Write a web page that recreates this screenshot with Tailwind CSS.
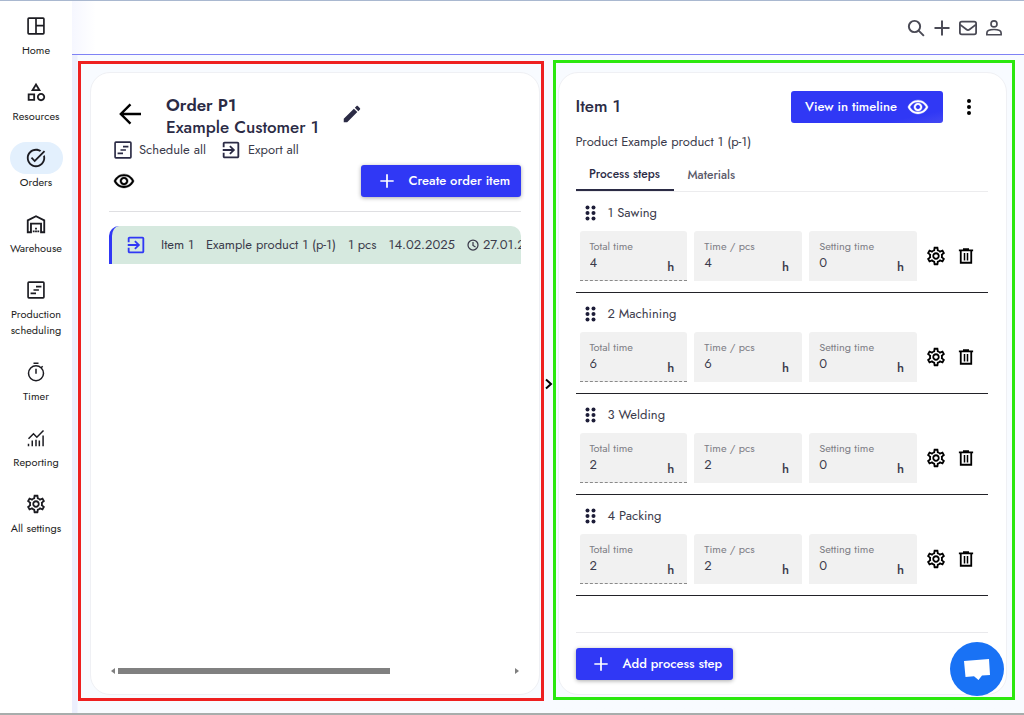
<!DOCTYPE html>
<html lang="en">
<head>
  <meta charset="UTF-8" />
  <meta name="viewport" content="width=device-width, initial-scale=1.0"/>
  <title>Order P1</title>
  <script src="https://cdn.jsdelivr.net/npm/@tailwindcss/browser@4"></script>
</head>
<body class="min-h-screen flex flex-col bg-[#f8fbff] text-[#3b3b4b] font-[Jost,Lato,sans-serif] border-t border-t-[#a9b8d0] border-b-2 border-b-[#a8adac]">

  <!-- Icons -->
  <svg class="hidden" xmlns="http://www.w3.org/2000/svg">
    <symbol id="i-home" viewBox="0 0 24 24"><path fill="none" stroke="currentColor" stroke-width="2" d="M3.500 2.500h17a1 1 0 0 1 1 1v17a1 1 0 0 1-1 1h-17a1 1 0 0 1-1-1v-17a1 1 0 0 1 1-1zM12 2.500v19M12 11.500h9.500"/></symbol>
    <symbol id="i-category" viewBox="0 0 24 24"><path fill="currentColor" d="M12 2l-5.500 9h11L12 2zm0 3.840L13.930 9h-3.870L12 5.840zM17.500 13c-2.490 0-4.500 2.010-4.500 4.500s2.010 4.500 4.500 4.500 4.500-2.010 4.500-4.500-2.010-4.500-4.500-4.500zm0 7c-1.380 0-2.500-1.120-2.500-2.500s1.120-2.500 2.500-2.500 2.500 1.120 2.500 2.500-1.120 2.500-2.500 2.500zM3 21.500h8v-8H3v8zm2-6h4v4H5v-4z"/></symbol>
    <symbol id="i-task" viewBox="0 0 24 24"><path fill="currentColor" d="M22 5.180L10.590 16.600l-4.240-4.240 1.410-1.410 2.830 2.830 10-10L22 5.180zm-2.210 5.040c.13.57.21 1.170.21 1.780 0 4.420-3.580 8-8 8s-8-3.580-8-8 3.580-8 8-8c1.580 0 3.040.46 4.280 1.250l1.440-1.440C16.100 2.670 14.130 2 12 2 6.480 2 2 6.480 2 12s4.480 10 10 10 10-4.480 10-10c0-1.190-.22-2.330-.6-3.390l-1.610 1.610z"/></symbol>
    <symbol id="i-warehouse" viewBox="0 0 24 24"><path fill="none" stroke="currentColor" stroke-width="2" d="M3 21V8l9-4.500L21 8v13h-3.500V11.500h-11V21H3z"/><path fill="currentColor" d="M8.500 19h2v2h-2zM11 16h2v2h-2zM11 19h2v2h-2zM13.500 19h2v2h-2z"/></symbol>
    <symbol id="i-schedule" viewBox="0 0 24 24"><path fill="none" stroke="currentColor" stroke-width="2" d="M3.500 2.500h17a1 1 0 0 1 1 1v17a1 1 0 0 1-1 1h-17a1 1 0 0 1-1-1v-17a1 1 0 0 1 1-1zM12 8h6.500M9 12h6.500M5.500 16H12"/></symbol>
    <symbol id="i-timer" viewBox="0 0 24 24"><path fill="none" stroke="currentColor" stroke-width="1.800" d="M9 1.500h6M12 8v6M18.500 6.500L20 5M21 13.500a9 9 0 1 1-18 0 9 9 0 0 1 18 0z"/></symbol>
    <symbol id="i-report" viewBox="0 0 24 24"><path fill="none" stroke="currentColor" stroke-width="1.800" d="M3 13l6-6 4 4 8-8M3 19v3M7.500 15v7M12 14v8M16 15v7M20.500 9v13"/></symbol>
    <symbol id="i-gear" viewBox="0 0 24 24"><path fill="currentColor" d="M19.430 12.980c.04-.32.07-.64.07-.98 0-.34-.03-.66-.07-.98l2.110-1.650c.19-.15.24-.42.12-.64l-2-3.460c-.09-.16-.26-.25-.44-.25-.06 0-.12.01-.17.03l-2.490 1c-.52-.4-1.080-.73-1.690-.98l-.38-2.650C14.460 2.180 14.250 2 14 2h-4c-.25 0-.46.18-.49.42l-.38 2.650c-.61.25-1.170.59-1.690.98l-2.490-1c-.06-.02-.12-.03-.18-.03-.17 0-.34.09-.43.25l-2 3.460c-.13.22-.07.49.12.64l2.110 1.650c-.04.32-.07.65-.07.98 0 .33.03.66.07.98l-2.110 1.650c-.19.15-.24.42-.12.64l2 3.460c.09.16.26.25.44.25.06 0 .12-.01.17-.03l2.490-1c.52.4 1.080.73 1.690.98l.38 2.650c.03.24.24.42.49.42h4c.25 0 .46-.18.49-.42l.38-2.650c.61-.25 1.170-.59 1.690-.98l2.490 1c.06.02.12.03.18.03.17 0 .34-.09.43-.25l2-3.460c.12-.22.07-.49-.12-.64l-2.110-1.650zm-1.980-1.710c.04.31.05.52.05.73 0 .21-.02.43-.05.73l-.14 1.130.89.7 1.080.84-.7 1.210-1.270-.51-1.040-.42-.9.68c-.43.32-.84.56-1.250.73l-1.060.43-.16 1.130-.2 1.350h-1.400l-.19-1.350-.16-1.130-1.060-.43c-.43-.18-.83-.41-1.230-.71l-.91-.7-1.060.43-1.270.51-.7-1.210 1.080-.84.89-.7-.14-1.130c-.03-.31-.05-.54-.05-.74s.02-.43.05-.73l.14-1.130-.89-.7-1.080-.84.7-1.210 1.270.51 1.040.42.9-.68c.43-.32.84-.56 1.250-.73l1.060-.43.16-1.130.2-1.350h1.390l.19 1.350.16 1.130 1.060.43c.43.18.83.41 1.230.71l.91.7 1.060-.43 1.270-.51.7 1.210-1.070.85-.89.7.14 1.130zM12 8c-2.210 0-4 1.790-4 4s1.790 4 4 4 4-1.790 4-4-1.790-4-4-4zm0 6c-1.100 0-2-.9-2-2s.9-2 2-2 2 .9 2 2-.9 2-2 2z"/></symbol>
    <symbol id="i-export" viewBox="0 0 24 24"><path fill="currentColor" d="M10.090 15.590L11.500 17l5-5-5-5-1.410 1.410L12.670 11H3v2h9.670l-2.580 2.590zM19 3H5c-1.110 0-2 .9-2 2v4h2V5h14v14H5v-4H3v4c0 1.100.89 2 2 2h14c1.100 0 2-.9 2-2V5c0-1.100-.9-2-2-2z"/></symbol>
    <symbol id="i-eye" viewBox="0 0 24 24"><path fill="currentColor" stroke="currentColor" stroke-width=".4" d="M12 6.500c3.790 0 7.170 2.130 8.820 5.500C19.170 15.370 15.790 17.500 12 17.500s-7.170-2.130-8.820-5.500C4.830 8.630 8.210 6.500 12 6.500m0-2C7 4.500 2.730 7.610 1 12c1.730 4.390 6 7.500 11 7.500s9.270-3.110 11-7.500c-1.730-4.390-6-7.500-11-7.500zm0 5c1.380 0 2.500 1.120 2.500 2.500s-1.120 2.500-2.500 2.500-2.500-1.120-2.500-2.500 1.120-2.500 2.500-2.500m0-2c-2.480 0-4.500 2.020-4.500 4.500s2.020 4.500 4.500 4.500 4.500-2.020 4.500-4.500-2.020-4.500-4.500-4.500z"/></symbol>
    <symbol id="i-edit" viewBox="0 0 24 24"><path fill="currentColor" d="M3 17.250V21h3.750L17.810 9.940l-3.750-3.750L3 17.250zM20.710 7.040c.39-.39.39-1.020 0-1.410l-2.340-2.340c-.39-.39-1.020-.39-1.410 0l-1.830 1.830 3.750 3.750 1.830-1.830z"/></symbol>
    <symbol id="i-trash" viewBox="0 0 24 24"><path fill="none" stroke="currentColor" stroke-width="2.400" d="M2.500 4.500h19M8 3h8M5 5v16h14V5"/><path fill="none" stroke="currentColor" stroke-width="2" d="M10 8v10M14 8v10"/></symbol>
    <symbol id="i-plus" viewBox="0 0 24 24"><path fill="none" stroke="currentColor" stroke-width="2.600" d="M12 2v20M2 12h20"/></symbol>
  </svg>

  <div class="flex flex-1">

    <!-- Sidebar -->
    <nav class="w-[72px] shrink-0 bg-white text-[#1c1c22] text-[11px] leading-4 text-center flex flex-col gap-[18px] pt-[9px]">
      <a href="#" class="flex flex-col items-center">
        <span class="w-[53px] h-8 rounded-full flex items-center justify-center"><svg class="size-5"><use href="#i-home"/></svg></span>
        Home
      </a>
      <a href="#" class="flex flex-col items-center">
        <span class="w-[53px] h-8 rounded-full flex items-center justify-center"><svg class="size-[22px]"><use href="#i-category"/></svg></span>
        Resources
      </a>
      <a href="#" class="flex flex-col items-center">
        <span class="w-[53px] h-8 rounded-full flex items-center justify-center bg-[#e3f0fd]"><svg class="size-[22px]"><use href="#i-task"/></svg></span>
        Orders
      </a>
      <a href="#" class="flex flex-col items-center">
        <span class="w-[53px] h-8 rounded-full flex items-center justify-center"><svg class="size-[22px]"><use href="#i-warehouse"/></svg></span>
        Warehouse
      </a>
      <a href="#" class="flex flex-col items-center">
        <span class="w-[53px] h-8 rounded-full flex items-center justify-center"><svg class="size-5"><use href="#i-schedule"/></svg></span>
        Production<br>scheduling
      </a>
      <a href="#" class="flex flex-col items-center">
        <span class="w-[53px] h-8 rounded-full flex items-center justify-center"><svg class="size-5"><use href="#i-timer"/></svg></span>
        Timer
      </a>
      <a href="#" class="flex flex-col items-center">
        <span class="w-[53px] h-8 rounded-full flex items-center justify-center"><svg class="size-5"><use href="#i-report"/></svg></span>
        Reporting
      </a>
      <a href="#" class="flex flex-col items-center">
        <span class="w-[53px] h-8 rounded-full flex items-center justify-center"><svg class="size-[22px]"><use href="#i-gear"/></svg></span>
        All settings
      </a>
    </nav>

    <div class="flex-1 min-w-0 flex flex-col">

      <!-- Top bar -->
      <header class="h-[54px] bg-linear-to-r from-[#f6f7ff] to-white to-[24px] border-b border-[#7f82f5] flex items-center justify-end gap-2 pr-[21px] text-[#4a4a55]">
        <button aria-label="Search"><svg class="size-[18px]" viewBox="0 0 24 24" fill="none" stroke="currentColor" stroke-width="2.600"><circle cx="10" cy="10" r="7.500"/><path d="M15.500 15.500l7 7"/></svg></button>
        <button aria-label="Add"><svg class="size-[18px]"><use href="#i-plus"/></svg></button>
        <button aria-label="Messages"><svg class="size-[18px]" viewBox="0 0 24 24" fill="none" stroke="currentColor" stroke-width="2.400"><rect x="1.200" y="3.500" width="21.600" height="17" rx="2.500"/><path d="M1.500 7.500l8.500 6.500q2 1.500 4 0L22.500 7.500"/></svg></button>
        <button aria-label="Account"><svg class="size-[18px]" viewBox="0 0 24 24" fill="none" stroke="currentColor" stroke-width="2.200"><circle cx="12" cy="6.500" r="4"/><path d="M2.500 21v-2.500c0-6 19-6 19 0V21z"/></svg></button>
      </header>

      <main class="flex-1 flex pl-[6px] pr-[9px] pt-[6px] pb-3 bg-linear-to-r from-[#eceffd] from-[5px] to-[#f8fbff] to-[6px]">

        <!-- Order -->
        <section class="flex-1 min-w-0 border-3 border-[#ee2020] pl-[9px] pr-px pt-2 pb-[3px] flex">
          <div class="flex-1 min-w-0 bg-white border border-[#eff0f4] rounded-[20px] px-[18px] pt-[21px] pb-5 flex flex-col">
            <div class="flex items-center pl-[10px] text-[#2b2b45]">
              <button aria-label="Back" class="pb-1"><svg class="size-[22px] text-black" viewBox="0 0 24 24" fill="none" stroke="currentColor" stroke-width="2.600"><path d="M24 12H2M12.500 1.500L2 12l10.500 10.500"/></svg></button>
              <div class="ml-[25px] text-[17px] leading-[22px]">
                <h1 class="font-semibold">Order P1</h1>
                <p class="font-medium">Example Customer 1</p>
              </div>
              <button aria-label="Edit" class="ml-[22px] pb-1"><svg class="size-[22px]"><use href="#i-edit"/></svg></button>
            </div>
            <div class="flex gap-[14px] h-6 text-[13px] pl-1">
              <button class="flex items-center gap-[6px]"><svg class="size-5 text-[#2b2b45]"><use href="#i-schedule"/></svg>Schedule all</button>
              <button class="flex items-center gap-[6px]"><svg class="size-[22px] text-[#2b2b45]"><use href="#i-export"/></svg>Export all</button>
            </div>
            <div class="flex items-center justify-between pl-1 pt-[3px] pb-[14px] border-b border-[#dfdfe2]">
              <button aria-label="Show" class="text-black"><svg class="size-[22px]"><use href="#i-eye"/></svg></button>
              <button class="h-8 w-40 flex items-center pl-[18px] gap-[14px] bg-[#3038f5] text-white text-[13px] font-medium rounded-[3px] shadow-[0_1px_4px_#0005] whitespace-nowrap"><svg class="size-4"><use href="#i-plus"/></svg>Create order item</button>
            </div>
            <div class="mt-[14px] h-[38px] flex items-center bg-[#d6e9df] border-l-3 border-[#3038f5] rounded-t-[10px] text-[13px] whitespace-nowrap overflow-hidden pl-[13px]">
              <svg class="size-[22px] shrink-0 text-[#3038f5] mr-[14px]"><use href="#i-export"/></svg>
              <span class="mr-3">Item 1</span>
              <span class="mr-3">Example product 1 (p-1)</span>
              <span class="mr-3">1 pcs</span>
              <span class="mr-3">14.02.2025</span>
              <svg class="size-3 shrink-0 mr-1" viewBox="0 0 24 24" fill="none" stroke="currentColor" stroke-width="2.500"><circle cx="12" cy="12" r="10"/><path d="M12 6v7l5 3"/></svg>
              <span>27.01.2025</span>
            </div>
            <!-- Horizontal scroll -->
            <div class="mt-auto flex items-center justify-between pl-[2px] pr-[2px]">
              <svg class="w-1 h-[6px] text-[#7f7f7f]" viewBox="0 0 4 6"><path fill="currentColor" d="M4 0v6L0 3z"/></svg>
              <div class="flex-1 mx-[3px]"><div class="w-[69%] h-[6px] bg-[#808080]"></div></div>
              <svg class="w-1 h-[6px] text-[#7f7f7f]" viewBox="0 0 4 6"><path fill="currentColor" d="M0 0v6l4-3z"/></svg>
            </div>
          </div>
        </section>

        <button aria-label="Expand" class="w-[9px] shrink-0 pt-[6px] text-black"><svg class="w-[9px] h-3" viewBox="0 0 9 12" fill="none" stroke="currentColor" stroke-width="2"><path d="M2 1.500L7 6l-5 4.500"/></svg></button>

        <!-- Item -->
        <section class="relative flex-1 min-w-0 border-3 border-[#2be80e] -mt-px mb-px pl-[2px] pr-[5px] pt-[9px] pb-[2px] flex">
          <div class="flex-1 min-w-0 bg-white border border-[#eff0f4] rounded-[20px] pl-[17px] pr-[18px] pt-[18px] pb-[14px] flex flex-col">
            <div class="flex items-center">
              <h2 class="flex-1 text-[17px] font-medium text-[#2b2b45]">Item 1</h2>
              <button class="h-8 flex items-center gap-[10px] px-[14px] bg-linear-to-br from-[#3038f5] from-80% to-[#4347f2] text-white text-[13px] font-medium rounded-[3px] whitespace-nowrap">View in timeline<svg class="size-[22px]"><use href="#i-eye"/></svg></button>
              <button aria-label="More" class="ml-4 mr-[9px] text-black"><svg class="size-5" viewBox="0 0 20 20" fill="currentColor"><circle cx="10" cy="4" r="2"/><circle cx="10" cy="10" r="2"/><circle cx="10" cy="16" r="2"/></svg></button>
            </div>
            <p class="mt-[10px] text-[13px] leading-[18px]">Product Example product 1 (p-1)</p>
            <div class="mt-2 h-[33px] flex border-b border-[#ececee] text-xs font-medium">
              <button class="w-[98px] border-b-2 border-[#2b2b45] text-[#2b2b45]">Process steps</button>
              <button class="px-[14px] text-[#5a5a6a]">Materials</button>
            </div>
            <div id="steps"></div>
            <div class="mt-auto border-t border-[#e9e9ec] pt-[15px]">
              <button class="h-8 w-[157px] flex items-center pl-[17px] gap-[14px] bg-[#3038f5] text-white text-[13px] font-medium rounded-[3px] shadow-[0_1px_4px_#0005] whitespace-nowrap"><svg class="size-4"><use href="#i-plus"/></svg>Add process step</button>
            </div>
          </div>
          <button aria-label="Chat" class="absolute right-2 bottom-px size-[54px] rounded-full bg-[#1972f5] flex items-center justify-center"><svg class="w-7 h-6" viewBox="0 0 28 24" fill="white"><path d="M1 4l25-2 1 16-8 .6L15.500 23 11 19.300 2.500 20z"/></svg></button>
        </section>
      </main>
    </div>
  </div>

  <script>
    const steps = [
      { name: 'Sawing', total: 4, pcs: 4, setting: 0 },
      { name: 'Machining', total: 6, pcs: 6, setting: 0 },
      { name: 'Welding', total: 2, pcs: 2, setting: 0 },
      { name: 'Packing', total: 2, pcs: 2, setting: 0 }
    ];

    function field(label, value, border) {
      return `
        <label class="relative flex-1 min-w-0 h-[50px] bg-[#f1f1f1] rounded-t-[3px] pl-[10px] pt-[7px] border-b border-dashed ${border}">
          <span class="block text-[11px] leading-4 text-[#7d7d85]">${label}</span>
          <input type="text" value="${value}" class="block w-16 h-[18px] text-[13px] bg-transparent outline-none">
          <span class="absolute right-[13px] bottom-[5px] text-[13px] leading-4 font-medium">h</span>
        </label>`;
    }

    document.getElementById('steps').innerHTML = steps.map((step, i) => `
      <div class="h-[101px] border-b border-[#222228]">
        <div class="flex items-center h-[39px] pt-[3px] pl-[9px] gap-3 text-[13px]">
          <svg class="w-[11px] h-4 text-[#1d1d38]" viewBox="0 0 11 16" fill="currentColor"><circle cx="2.500" cy="2.500" r="2"/><circle cx="8.500" cy="2.500" r="2"/><circle cx="2.500" cy="8" r="2"/><circle cx="8.500" cy="8" r="2"/><circle cx="2.500" cy="13.500" r="2"/><circle cx="8.500" cy="13.500" r="2"/></svg>
          <span>${i + 1} ${step.name}</span>
        </div>
        <div class="flex items-center pl-1 pr-[13px]">
          <div class="flex-1 flex gap-[7px]">
            ${field('Total time', step.total, 'border-[#8a8a8a]')}
            ${field('Time / pcs', step.pcs, 'border-transparent')}
            ${field('Setting time', step.setting, 'border-transparent')}
          </div>
          <button aria-label="Settings" class="ml-2 text-black"><svg class="size-[22px]"><use href="#i-gear"/></svg></button>
          <button aria-label="Delete" class="ml-[10px] text-black"><svg class="size-[18px]"><use href="#i-trash"/></svg></button>
        </div>
      </div>`).join('');
  </script>

</body>
</html>
